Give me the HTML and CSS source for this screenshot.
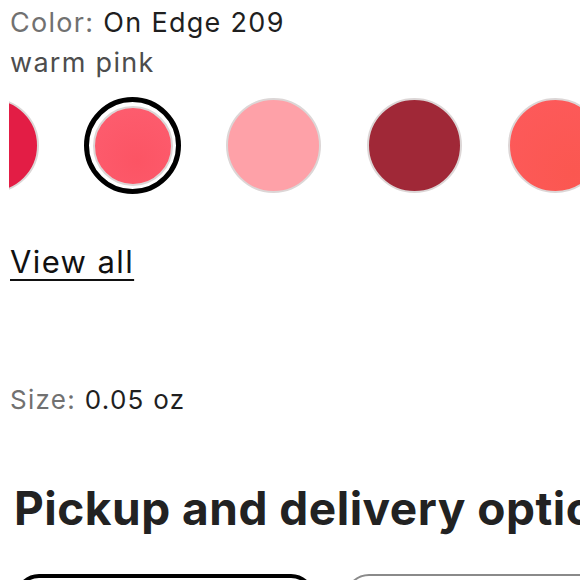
FILE: index.html
```html
<!DOCTYPE html>
<html lang="en">
<head>
<meta charset="utf-8">
<title>Product options</title>
<link rel="stylesheet" href="styles.css">
</head>
<body>
<main class="page">
  <section class="color-info">
    <div class="color-line"><span class="label">Color:</span> <span class="value">On Edge 209</span></div>
    <div class="color-desc">warm pink</div>
  </section>

  <div class="swatch-scroller">
    <ul class="swatches">
      <li class="swatch"><span class="chip chip-crimson"></span></li>
      <li class="swatch selected"><span class="chip chip-warm-pink"></span></li>
      <li class="swatch"><span class="chip chip-light-pink"></span></li>
      <li class="swatch"><span class="chip chip-berry"></span></li>
      <li class="swatch"><span class="chip chip-coral"></span></li>
    </ul>
  </div>

  <a class="view-all" href="#">View all</a>

  <div class="size-line"><span class="label">Size:</span> <span class="value">0.05 oz</span></div>

  <h2 class="heading">Pickup and delivery options</h2>

  <div class="options">
    <div class="option active"></div>
    <div class="option"></div>
  </div>
</main>
</body>
</html>
```

FILE: styles.css
```css
html, body {
  margin: 0;
  padding: 0;
  background: #ffffff;
  overflow: hidden;
}

body {
  font-family: Inter, "Noto Sans", sans-serif;
  color: #1f1f1f;
}

.page {
  padding: 3px 0 0 10px;
  width: 570px;
  height: 577px;
  overflow: hidden;
}

.color-info {
  font-size: 27px;
  line-height: 40px;
  letter-spacing: 1.3px;
}

.label {
  color: #717171;
}

.value {
  color: #1f1f1f;
}

.color-desc {
  color: #4d4d4d;
}

.swatch-scroller {
  margin: 14px 0 0 -1px;
  width: 571px;
  overflow: hidden;
}

.swatches {
  list-style: none;
  margin: 0 0 0 -66px;
  padding: 0;
  display: flex;
  align-items: center;
  gap: 44px;
  height: 97px;
}

.swatch {
  flex: 0 0 97px;
  height: 97px;
  display: flex;
  align-items: center;
  justify-content: center;
  box-sizing: border-box;
  border-radius: 50%;
}

.chip {
  display: block;
  width: 95px;
  height: 95px;
  box-sizing: border-box;
  border-radius: 50%;
  border: 2px solid #dcd6d6;
}

.swatch.selected {
  border: 5px solid #000000;
}

.swatch.selected .chip {
  width: 80px;
  height: 80px;
}

.chip-crimson { background: #e31d45; }
.chip-warm-pink { background: radial-gradient(circle at 55% 70%, #fc5464, #fd5e70); }
.chip-light-pink { background: #fea1a8; }
.chip-berry { background: #a02837; }
.chip-coral { background: radial-gradient(circle at 70% 80%, #fb5750, #fd5a5c); }

.view-all {
  display: inline-block;
  margin-top: 48px;
  font-size: 31px;
  line-height: 40px;
  letter-spacing: 1.4px;
  color: #111111;
  text-decoration: underline;
  text-decoration-thickness: 2px;
  text-underline-offset: 6px;
}

.size-line {
  margin-top: 100px;
  font-size: 26px;
  line-height: 36px;
  letter-spacing: 1.3px;
}

.heading {
  margin: 62px 0 0 4px;
  font-size: 46px;
  line-height: 56px;
  font-weight: 700;
  letter-spacing: 0.5px;
  color: #222222;
  white-space: nowrap;
}

.options {
  margin: 38px 0 0 5px;
  display: flex;
  gap: 30px;
}

.option {
  flex: 0 0 300px;
  height: 60px;
  box-sizing: border-box;
  border: 2px solid #8a8a8a;
  border-radius: 24px;
}

.option.active {
  border: 4px solid #000000;
}
```
